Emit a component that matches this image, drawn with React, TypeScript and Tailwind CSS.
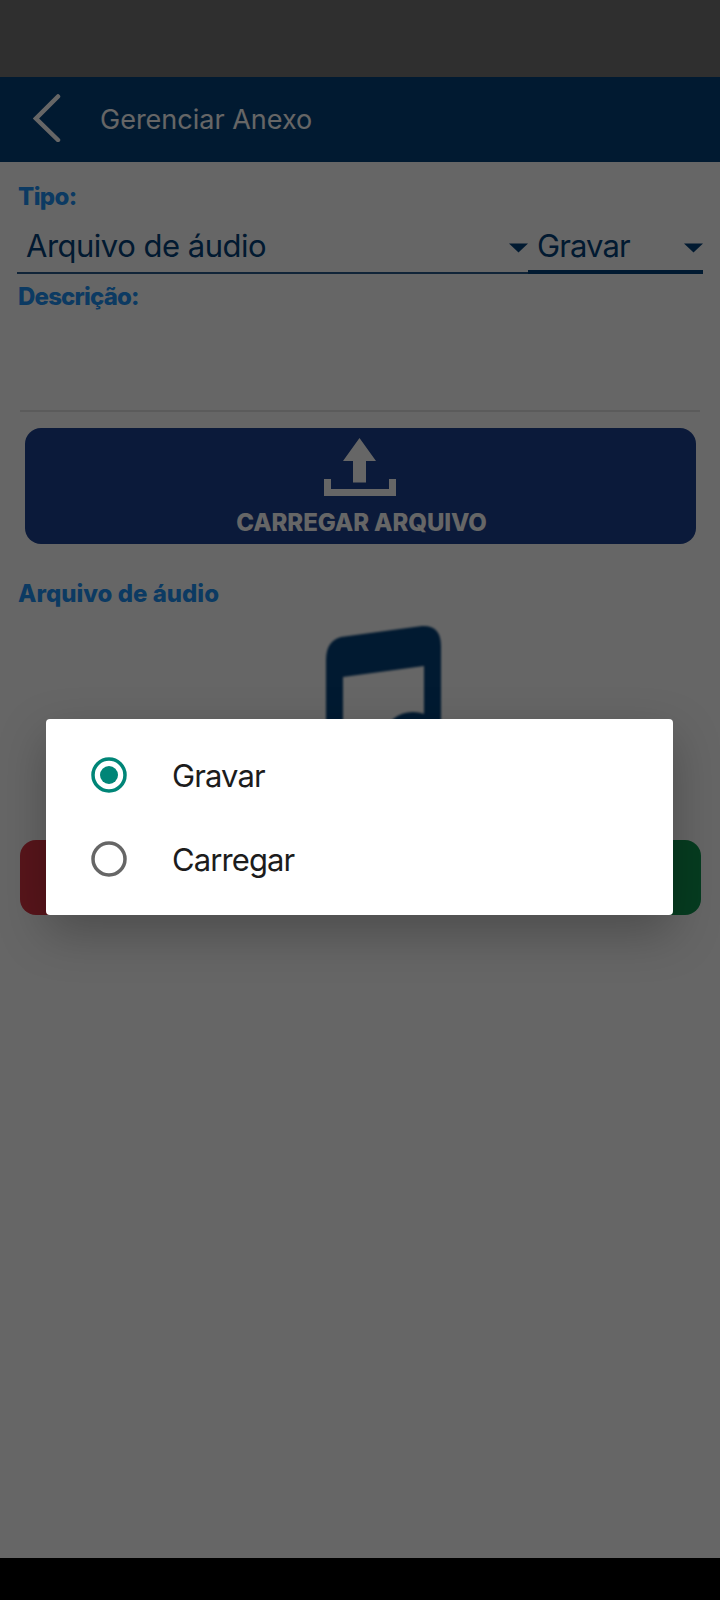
import { useState } from "react";

const options = ["Gravar", "Carregar"];

function Caret() {
    return (
        <svg className="mt-[3px] shrink-0" width="19" height="10" viewBox="0 0 19 10">
            <path d="M0 0.5h19L9.5 9.5z" fill="#04417a" />
        </svg>
    );
}

function Label({ children, className = "" }: { children: string; className?: string }) {
    return <div className={`h-7 text-[24px] leading-7 font-extrabold whitespace-nowrap text-[#2092f5] ${className}`}>{children}</div>;
}

function Header() {
    return (
        <header className="flex h-[85px] items-center bg-[#04417a] pl-[33px]">
            <svg className="-mt-1" width="28" height="48" viewBox="0 0 28 48" fill="none" stroke="white" strokeWidth="4.5" strokeLinecap="round">
                <path d="M25 2.500L3 24.500L25 46" />
            </svg>
            <h1 className="ml-[39px] text-[27px] leading-8 text-white">Gerenciar Anexo</h1>
        </header>
    );
}

function UploadIcon() {
    return (
        <svg className="-ml-px" width="74" height="58" viewBox="0 0 74 58" fill="white">
            <path d="M36.500 0L53 23H43V44.500H30V23H20z" />
            <path d="M1 41h7v10h58V41h7v17H1z" />
        </svg>
    );
}

function MusicIcon() {
    return (
        <svg className="blur-[1px]" width="120" height="150" viewBox="0 0 120 150" fill="#04417a">
            <path d="M1 36Q1 17 16 13L97 2Q116 1 116 22V120H99V42L18 53V140H1z" />
            <ellipse cx="88" cy="112" rx="28" ry="24" />
        </svg>
    );
}

function App() {
    const [selected, setSelected] = useState("Gravar");

    return (
        <div className="relative h-[1600px] w-[720px] overflow-hidden bg-white font-['Inter',sans-serif]">
            <div className="h-[77px] bg-[#767676]" />
            <Header />
            <main className="pt-[21px] pr-[17px] pl-[18px]">
                <Label className="tracking-[-0.6px]">Tipo:</Label>
                <div className="-ml-px flex h-[63px]">
                    <div className="flex w-[511px] items-center justify-between border-b-2 border-[#2a5a8c] pt-[9px] pl-[9px] text-[31px] tracking-[-0.5px] text-[#04417a]">
                        <span>Arquivo de áudio</span>
                        <Caret />
                    </div>
                    <div className="flex w-[175px] items-center justify-between border-b-4 border-[#04417a] pt-[11px] pl-[9px] text-[31px] tracking-[-0.9px] text-[#04417a]">
                        <span>{selected}</span>
                        <Caret />
                    </div>
                </div>
                <div className="pt-[9px]">
                    <Label className="tracking-[-0.8px]">Descrição:</Label>
                </div>
                <div className="mr-[3px] ml-[2px] h-[101px] border-b-2 border-[#e4e4e4]" />
                <button className="mt-4 ml-[7px] flex h-[116px] w-[671px] flex-col items-center rounded-2xl bg-[#1c4191] pt-[10px]">
                    <UploadIcon />
                    <span className="mt-[13px] ml-[2px] text-[24px] leading-7 font-extrabold tracking-[-0.1px] text-white">CARREGAR ARQUIVO</span>
                </button>
                <div className="pt-9">
                    <Label>Arquivo de áudio</Label>
                </div>
                <div className="mt-4 ml-[307px] h-[150px]">
                    <MusicIcon />
                </div>
                <div className="mt-[66px] flex justify-between pr-[2px] pl-[2px]">
                    <button className="h-[75px] w-[330px] rounded-2xl bg-[#dc3545]" />
                    <button className="h-[75px] w-[330px] rounded-2xl bg-[#109650]" />
                </div>
            </main>
            <div className="absolute inset-0 bg-black/60" />
            <div className="absolute inset-x-0 bottom-0 h-[42px] bg-black" />
            <div className="absolute top-[719px] left-[46px] flex h-[196px] w-[627px] flex-col rounded bg-white py-[14px] shadow-[0_18px_48px_rgba(0,0,0,0.25)]">
                {options.map((option) => (
                    <button key={option} onClick={() => setSelected(option)} className="flex h-[84px] items-center pl-[45px]">
                        <svg width="36" height="36" viewBox="0 0 36 36" fill="none">
                            <circle cx="18" cy="18" r="16" stroke={selected === option ? "#008577" : "#666666"} strokeWidth="3.500" />
                            {selected === option && <circle cx="18" cy="18" r="9" fill="#008577" />}
                        </svg>
                        <span className="mt-[2px] ml-[45px] text-[31px] tracking-[-0.9px] text-[#1c1c1c]">{option}</span>
                    </button>
                ))}
            </div>
        </div>
    );
}

export default App
